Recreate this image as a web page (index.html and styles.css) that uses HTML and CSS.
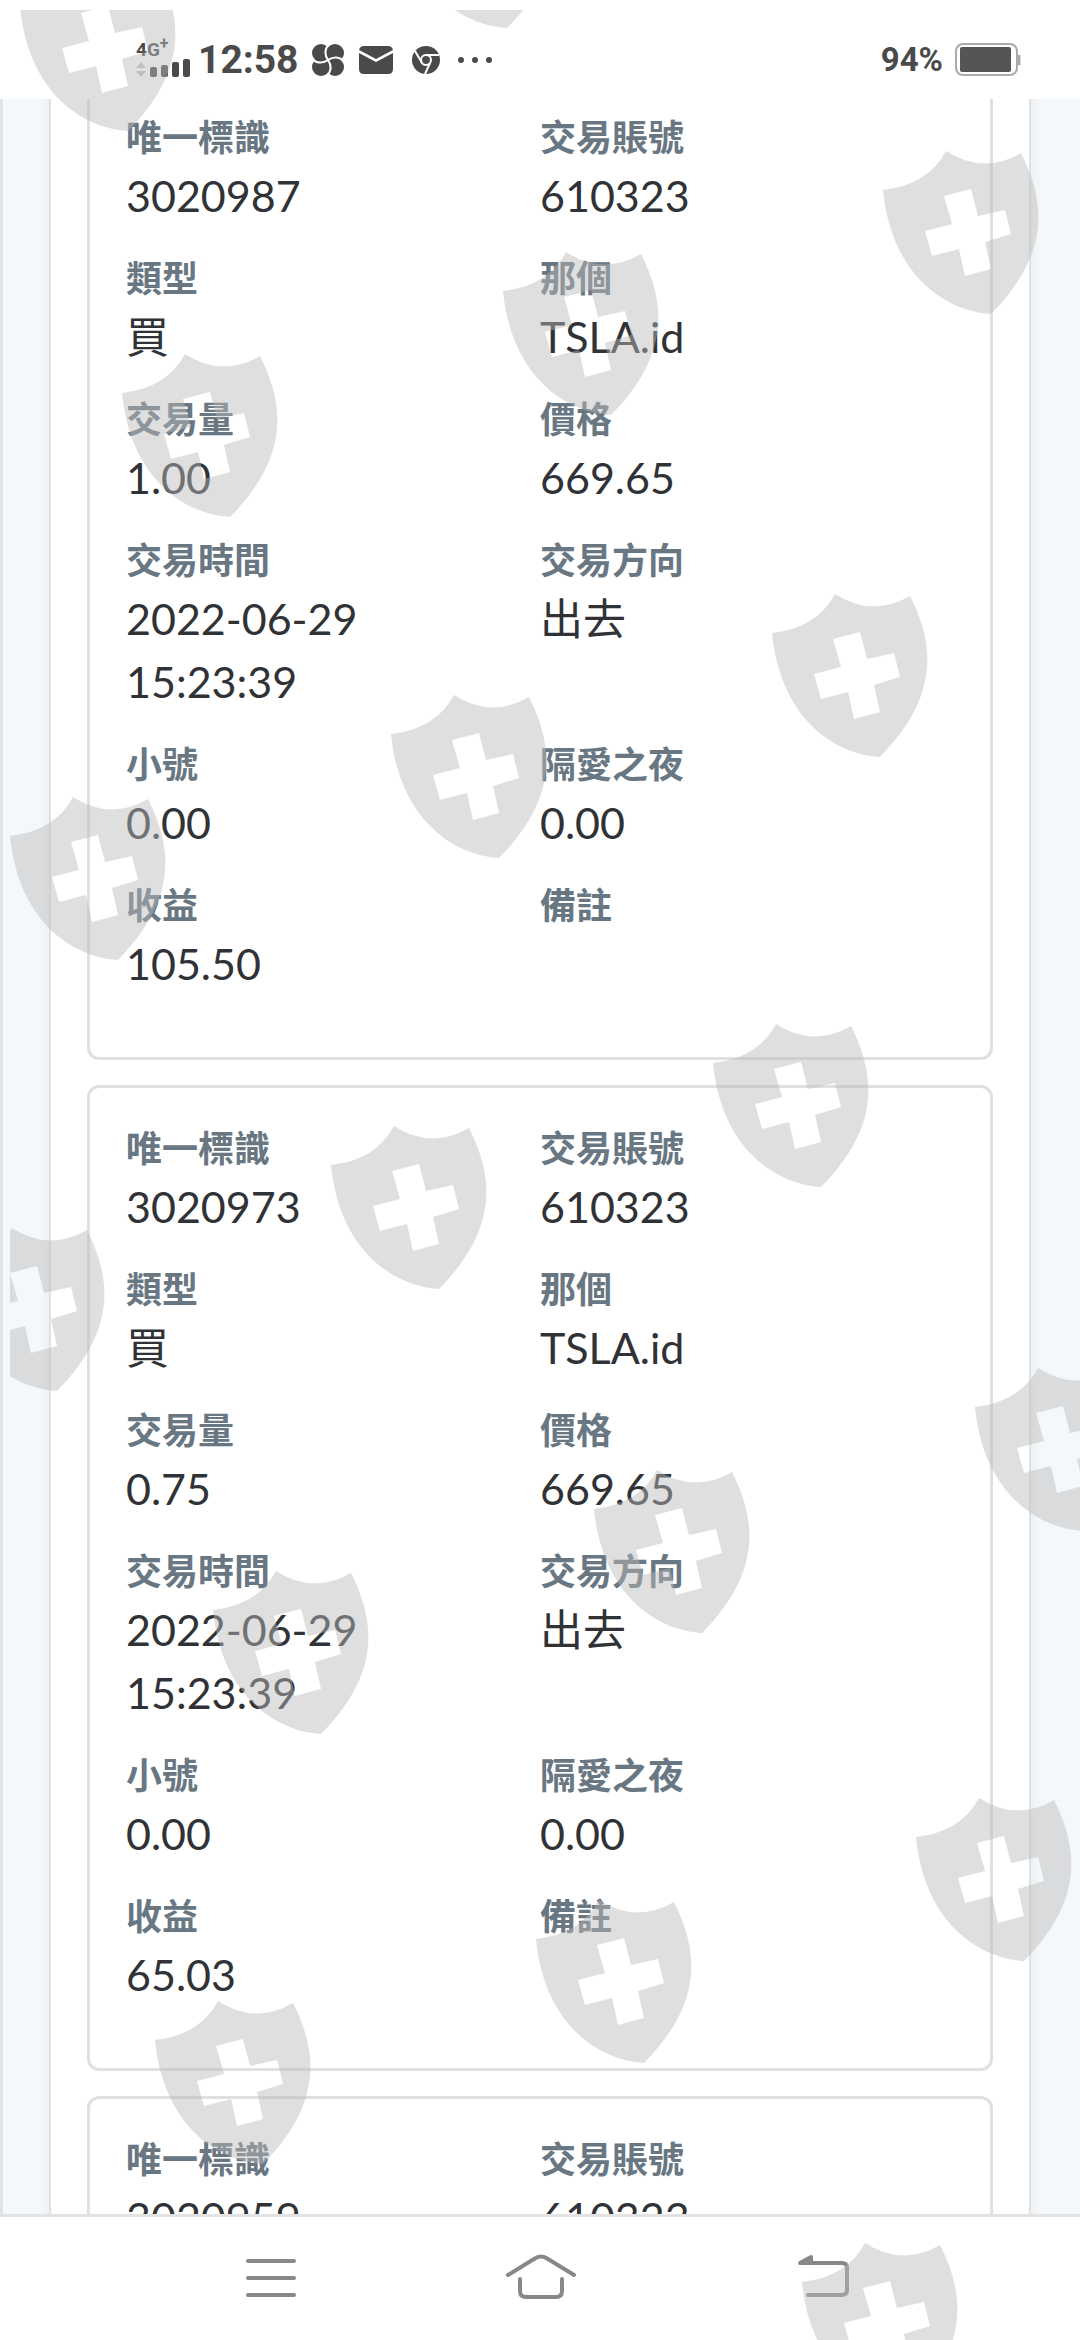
FILE: index.html
```html
<!DOCTYPE html>
<html lang="zh-Hant">

<head>
    <meta charset="UTF-8">
    <meta name="viewport" content="width=device-width, initial-scale=1">
    <title>交易記錄</title>
    <link rel="stylesheet" href="styles.css">
</head>

<body>
    <header class="status">
        <div class="signal">
            <span class="net">4G<sup>+</sup></span>
            <svg width="54" height="20" viewBox="0 0 54 20">
                <path d="M0 10l5-6 5 6zM0 13l5 6 5-6z" fill="#c4c4c4" />
                <g fill="#4a4a4a">
                    <rect x="14" y="9" width="7" height="10" rx="2" />
                    <rect x="25" y="7" width="7" height="12" rx="2" />
                    <rect x="36" y="4" width="7" height="15" rx="2" />
                    <rect x="47" y="1" width="7" height="18" rx="2" />
                </g>
            </svg>
        </div>
        <span class="time">12:58</span>
        <svg class="petal" width="34" height="34" viewBox="0 0 34 34">
            <g fill="#4a4a4a">
                <circle cx="10" cy="10" r="9" />
                <circle cx="24" cy="10" r="9" />
                <circle cx="10" cy="24" r="9" />
                <circle cx="24" cy="24" r="9" />
                <circle cx="17" cy="17" r="5" />
            </g>
            <path d="M19 0Q11 8 17 17Q23 26 15 34M0 15Q8 23 17 17Q26 11 34 19" fill="none" stroke="#fff" stroke-width="2" />
        </svg>
        <svg class="mail" width="34" height="28" viewBox="0 0 34 28">
            <path d="M5 0h24q4 0 5 4L17 13 0 4q1-4 5-4zM0 7l17 9L34 7v16q0 5-5 5H5q-5 0-5-5z" fill="#4a4a4a" />
        </svg>
        <svg class="chrome" width="28" height="28" viewBox="0 0 28 28">
            <circle cx="14" cy="14" r="14" fill="#4a4a4a" />
            <g fill="none" stroke="#fff" stroke-width="2">
                <circle cx="14" cy="14" r="5" />
                <path d="M14 9h13M10 17L3 5M18 17l-5 11" />
            </g>
        </svg>
        <svg class="dots" width="34" height="8" viewBox="0 0 34 8" fill="#4a4a4a">
            <circle cx="3" cy="4" r="3" />
            <circle cx="17" cy="4" r="3" />
            <circle cx="31" cy="4" r="3" />
        </svg>
        <span class="percent">94%</span>
        <svg class="battery" width="66" height="34" viewBox="0 0 66 34">
            <rect x="1" y="1" width="61" height="31" rx="7" fill="#fff" stroke="#aaa" stroke-width="2" />
            <rect x="5" y="4" width="51" height="25" rx="2" fill="#555" />
            <path d="M64 12v10" stroke="#aaa" stroke-width="3" />
        </svg>
    </header>

    <main class="page">
        <div class="panel">
            <dl class="card">
                <div><dt>唯一標識</dt><dd>3020987</dd></div>
                <div><dt>交易賬號</dt><dd>610323</dd></div>
                <div><dt>類型</dt><dd>買</dd></div>
                <div><dt>那個</dt><dd>TSLA.id</dd></div>
                <div><dt>交易量</dt><dd>1.00</dd></div>
                <div><dt>價格</dt><dd>669.65</dd></div>
                <div><dt>交易時間</dt><dd>2022-06-29 15:23:39</dd></div>
                <div><dt>交易方向</dt><dd>出去</dd></div>
                <div><dt>小號</dt><dd>0.00</dd></div>
                <div><dt>隔愛之夜</dt><dd>0.00</dd></div>
                <div><dt>收益</dt><dd>105.50</dd></div>
                <div><dt>備註</dt><dd></dd></div>
            </dl>
            <dl class="card">
                <div><dt>唯一標識</dt><dd>3020973</dd></div>
                <div><dt>交易賬號</dt><dd>610323</dd></div>
                <div><dt>類型</dt><dd>買</dd></div>
                <div><dt>那個</dt><dd>TSLA.id</dd></div>
                <div><dt>交易量</dt><dd>0.75</dd></div>
                <div><dt>價格</dt><dd>669.65</dd></div>
                <div><dt>交易時間</dt><dd>2022-06-29 15:23:39</dd></div>
                <div><dt>交易方向</dt><dd>出去</dd></div>
                <div><dt>小號</dt><dd>0.00</dd></div>
                <div><dt>隔愛之夜</dt><dd>0.00</dd></div>
                <div><dt>收益</dt><dd>65.03</dd></div>
                <div><dt>備註</dt><dd></dd></div>
            </dl>
            <dl class="card">
                <div><dt>唯一標識</dt><dd>3020959</dd></div>
                <div><dt>交易賬號</dt><dd>610323</dd></div>
            </dl>
        </div>
    </main>

    <nav class="navbar">
        <button type="button" aria-label="選單">
            <svg width="80" height="60" viewBox="0 0 80 60">
                <path d="M18 12h46M18 29h46M18 46h46" />
            </svg>
        </button>
        <button type="button" aria-label="主頁">
            <svg width="80" height="60" viewBox="0 0 80 60">
                <path d="M8 26L34 10Q41 5 48 10L74 26M20 30v12q0 6 6 6h30q6 0 6-6V30" />
            </svg>
        </button>
        <button type="button" aria-label="返回">
            <svg width="80" height="60" viewBox="0 0 80 60">
                <path d="M42 14h30q5 0 5 5v22q0 5-5 5H38" />
                <path d="M30 14L41 8v6z" fill="#888" />
            </svg>
        </button>
    </nav>

    <!-- watermark -->
    <svg class="watermark" aria-hidden="true">
        <defs>
            <path id="shield" fill-rule="evenodd" d="M0 39Q45 34 63 0Q100 24 138 2C161 48 170 100 108 163C60 160 8 122 0 39zM61 45L88 38L95 65L122 59L128 83L102 91L108 118L82 125L76 98L49 105L42 80L69 73z" />
        </defs>
        <g transform="translate(-10 -10)">
            <use href="#shield" x="20" y="-32" />
            <use href="#shield" x="399" y="-135" />
            <use href="#shield" x="883" y="151" />
            <use href="#shield" x="503" y="252" />
            <use href="#shield" x="122" y="354" />
            <use href="#shield" x="772" y="594" />
            <use href="#shield" x="391" y="695" />
            <use href="#shield" x="10" y="797" />
            <use href="#shield" x="713" y="1024" />
            <use href="#shield" x="331" y="1126" />
            <use href="#shield" x="-51" y="1228" />
            <use href="#shield" x="975" y="1368" />
            <use href="#shield" x="594" y="1470" />
            <use href="#shield" x="213" y="1571" />
            <use href="#shield" x="916" y="1798" />
            <use href="#shield" x="536" y="1900" />
            <use href="#shield" x="155" y="2001" />
            <use href="#shield" x="802" y="2243" />
        </g>
    </svg>
</body>

</html>
```

FILE: styles.css
```css
* {
    padding: 0;
    margin: 0;
    box-sizing: border-box;
}

body {
    display: flex;
    flex-direction: column;
    height: 100vh;
    overflow: hidden;
    background-color: #fff;
    font-family: Lato, "Noto Sans CJK TC", sans-serif;
    color: #303236;
}

svg {
    display: block;
    flex: none;
}

/* status bar */
.status {
    display: flex;
    align-items: center;
    height: 99px;
    padding: 20px 59px 0 136px;
    font-family: Roboto, sans-serif;
    color: #4a4a4a;
}

.net {
    display: block;
    font-size: 19px;
    line-height: 16px;
    font-weight: 700;
}

.net sup {
    font-size: 16px;
    line-height: 0;
}

.time {
    margin: 0 12px 0 8px;
    font-size: 39px;
    font-weight: 700;
}

.mail {
    margin: 0 19px 0 14px;
}

.dots {
    margin-left: 18px;
}

.percent {
    margin-left: auto;
    font-size: 33px;
    font-weight: 700;
}

.battery {
    margin-left: 12px;
}

/* records */
.page {
    flex: 1;
    min-height: 0;
    overflow: hidden;
    padding: 0 49px 0 46px;
    border-left: 3px solid #e0e4e7;
    background-color: #f4f8fb;
}

.panel {
    min-height: 100%;
    padding: 0 36px;
    border: solid #dfe2e4;
    border-width: 0 2px;
    background-color: #fff;
    box-shadow: 0 0 12px rgba(0, 0, 0, 0.06);
}

.card {
    display: grid;
    grid-template-columns: 1fr 1fr;
    row-gap: 24px;
    margin-bottom: 25px;
    padding: 33px 36px 62px;
    border: 3px solid #e0e0e0;
    border-radius: 12px;
}

.card:first-child {
    margin-top: -25px;
}

.card div {
    padding-right: 30px;
}

.card dt {
    font-size: 36px;
    line-height: 54px;
    font-weight: 700;
    color: #697783;
}

.card dd {
    font-size: 43px;
    line-height: 63px;
}

/* bottom buttons */
.navbar {
    display: flex;
    height: 126px;
    padding: 0 135px;
    border-top: 3px solid #e2e2e2;
}

.navbar button {
    display: flex;
    flex: 1;
    align-items: center;
    justify-content: center;
    border: none;
    background: none;
}

.navbar svg {
    fill: none;
    stroke: #888;
    stroke-width: 4;
    stroke-linecap: round;
    stroke-linejoin: round;
}

.watermark {
    position: absolute;
    top: 10px;
    left: 10px;
    width: calc(100% - 10px);
    height: calc(100% - 10px);
    overflow: hidden;
    fill: #bbb;
    opacity: 0.46;
    pointer-events: none;
}
```
